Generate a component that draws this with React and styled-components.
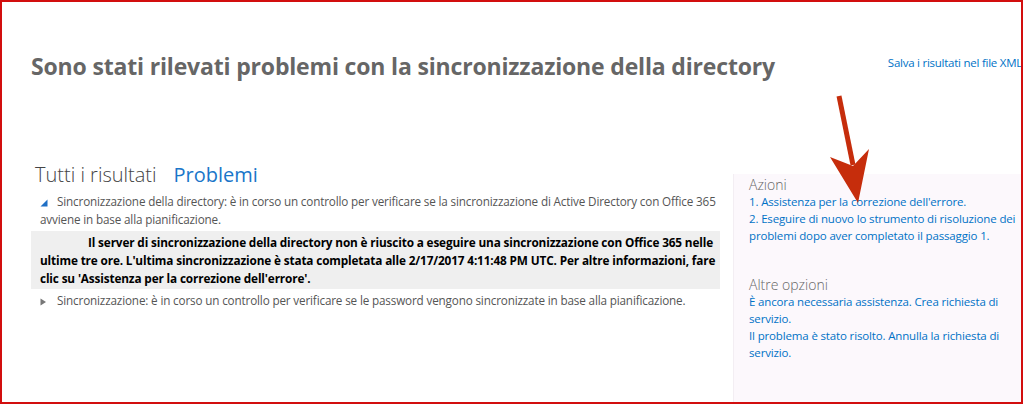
import React from "react";
import styled, { createGlobalStyle } from "styled-components";

const GlobalStyle = createGlobalStyle`
  body {
    margin: 0;
    background: #fff;
    font-family: "Open Sans", "Noto Sans", sans-serif;
  }
`;

const Frame = styled.div`
  position: relative;
  box-sizing: border-box;
  width: 1023px;
  height: 404px;
  border: 2px solid #d20e0e;
  overflow: hidden;
  background: #fff;
`;

const Header = styled.div`
  display: flex;
  justify-content: space-between;
  align-items: flex-start;
  padding: 47px 0 0 29px;
  height: 114px;
  box-sizing: border-box;
`;

const Title = styled.h1`
  margin: 0;
  font-size: 23px;
  line-height: 34px;
  font-weight: 700;
  color: #666;
  letter-spacing: -0.17px;
`;

const SaveLink = styled.a`
  margin-top: 6px;
  margin-right: -1px;
  font-size: 11.5px;
  line-height: 16px;
  color: #0072c6;
  white-space: nowrap;
  letter-spacing: -0.25px;
`;

const Main = styled.div`
  display: flex;
  align-items: flex-start;
  padding-left: 29px;
`;

const Results = styled.div`
  width: 689px;
  padding-top: 46px;
`;

const Tabs = styled.div`
  display: flex;
  gap: 17px;
  padding-left: 4px;
  font-size: 20px;
  line-height: 26px;
`;

const Tab = styled.span`
  color: ${(p) => (p.$active ? "#1a76c9" : "#444")};
  font-weight: ${(p) => (p.$active ? 400 : 300)};
`;

const Item = styled.div`
  margin-top: ${(p) => p.$top || 0}px;
  padding: 0 0 0 9px;
  font-size: 11.7px;
  line-height: 18px;
  color: #555;
  letter-spacing: -0.15px;
`;

const Toggle = styled.span`
  display: inline-block;
  width: 17px;
  vertical-align: middle;
  svg {
    display: block;
  }
`;

const ErrorBox = styled.div`
  margin: 3px 0 0;
  padding: 2px 4px 2px 9px;
  background: #efefef;
  font-size: 11.8px;
  line-height: 18px;
  font-weight: 700;
  color: #000;
  text-indent: 48px;
  letter-spacing: -0.15px;
`;

const Panel = styled.div`
  margin-left: 13px;
  margin-top: 58px;
  flex: 1;
  height: 240px;
  padding: 2px 0 0 15px;
  background: #fcf8fc;
  border-left: 1px solid #f3eef3;
`;

const Section = styled.div`
  margin-bottom: ${(p) => p.$gap || 0}px;
`;

const SectionTitle = styled.div`
  font-size: 14px;
  line-height: 18px;
  font-weight: 300;
  color: #666;
`;

const PanelLink = styled.a`
  display: block;
  font-size: 11.5px;
  line-height: 16.8px;
  color: #0072c6;
  letter-spacing: -0.15px;
`;

const Arrow = styled.svg`
  position: absolute;
  left: 822px;
  top: 88px;
  pointer-events: none;
`;

const Expanded = () => (
  <svg width="8" height="8" viewBox="0 0 8 8">
    <polygon points="7.5,0.5 7.5,7.5 0.5,7.5" fill="#1f6fc5" />
  </svg>
);

const Collapsed = () => (
  <svg width="8" height="8" viewBox="0 0 8 8">
    <polygon points="0.5,0.5 6,4 0.5,7.5" fill="#777" />
  </svg>
);

export default function App() {
  return (
    <>
      <GlobalStyle />
      <Frame>
        <Header>
          <Title>Sono stati rilevati problemi con la sincronizzazione della directory</Title>
          <SaveLink>Salva i risultati nel file XML</SaveLink>
        </Header>
        <Main>
          <Results>
            <Tabs>
              <Tab>Tutti i risultati</Tab>
              <Tab $active>Problemi</Tab>
            </Tabs>
            <Item $top={4}>
              <Toggle><Expanded /></Toggle>
              Sincronizzazione della directory: è in corso un controllo per verificare se la sincronizzazione di Active Directory con Office 365 avviene in base alla pianificazione.
            </Item>
            <ErrorBox>
              Il server di sincronizzazione della directory non è riuscito a eseguire una sincronizzazione con Office 365 nelle ultime tre ore. L'ultima sincronizzazione è stata completata alle 2/17/2017 4:11:48 PM UTC. Per altre informazioni, fare clic su 'Assistenza per la correzione dell'errore'.
            </ErrorBox>
            <Item $top={2}>
              <Toggle><Collapsed /></Toggle>
              Sincronizzazione: è in corso un controllo per verificare se le password vengono sincronizzate in base alla pianificazione.
            </Item>
          </Results>
          <Panel>
            <Section $gap={32}>
              <SectionTitle>Azioni</SectionTitle>
              <PanelLink>1. Assistenza per la correzione dell'errore.</PanelLink>
              <PanelLink>2. Eseguire di nuovo lo strumento di risoluzione dei problemi dopo aver completato il passaggio 1.</PanelLink>
            </Section>
            <Section>
              <SectionTitle>Altre opzioni</SectionTitle>
              <PanelLink>È ancora necessaria assistenza. Crea richiesta di servizio.</PanelLink>
              <PanelLink>Il problema è stato risolto. Annulla la richiesta di servizio.</PanelLink>
            </Section>
          </Panel>
        </Main>
        <Arrow width="60" height="125" viewBox="0 0 60 125">
          <line x1="15" y1="6" x2="29" y2="75" stroke="#c62d0c" strokeWidth="5" />
          <polygon points="6,67 29,76 45,59 34,113" fill="#c62d0c" />
        </Arrow>
      </Frame>
    </>
  );
}
